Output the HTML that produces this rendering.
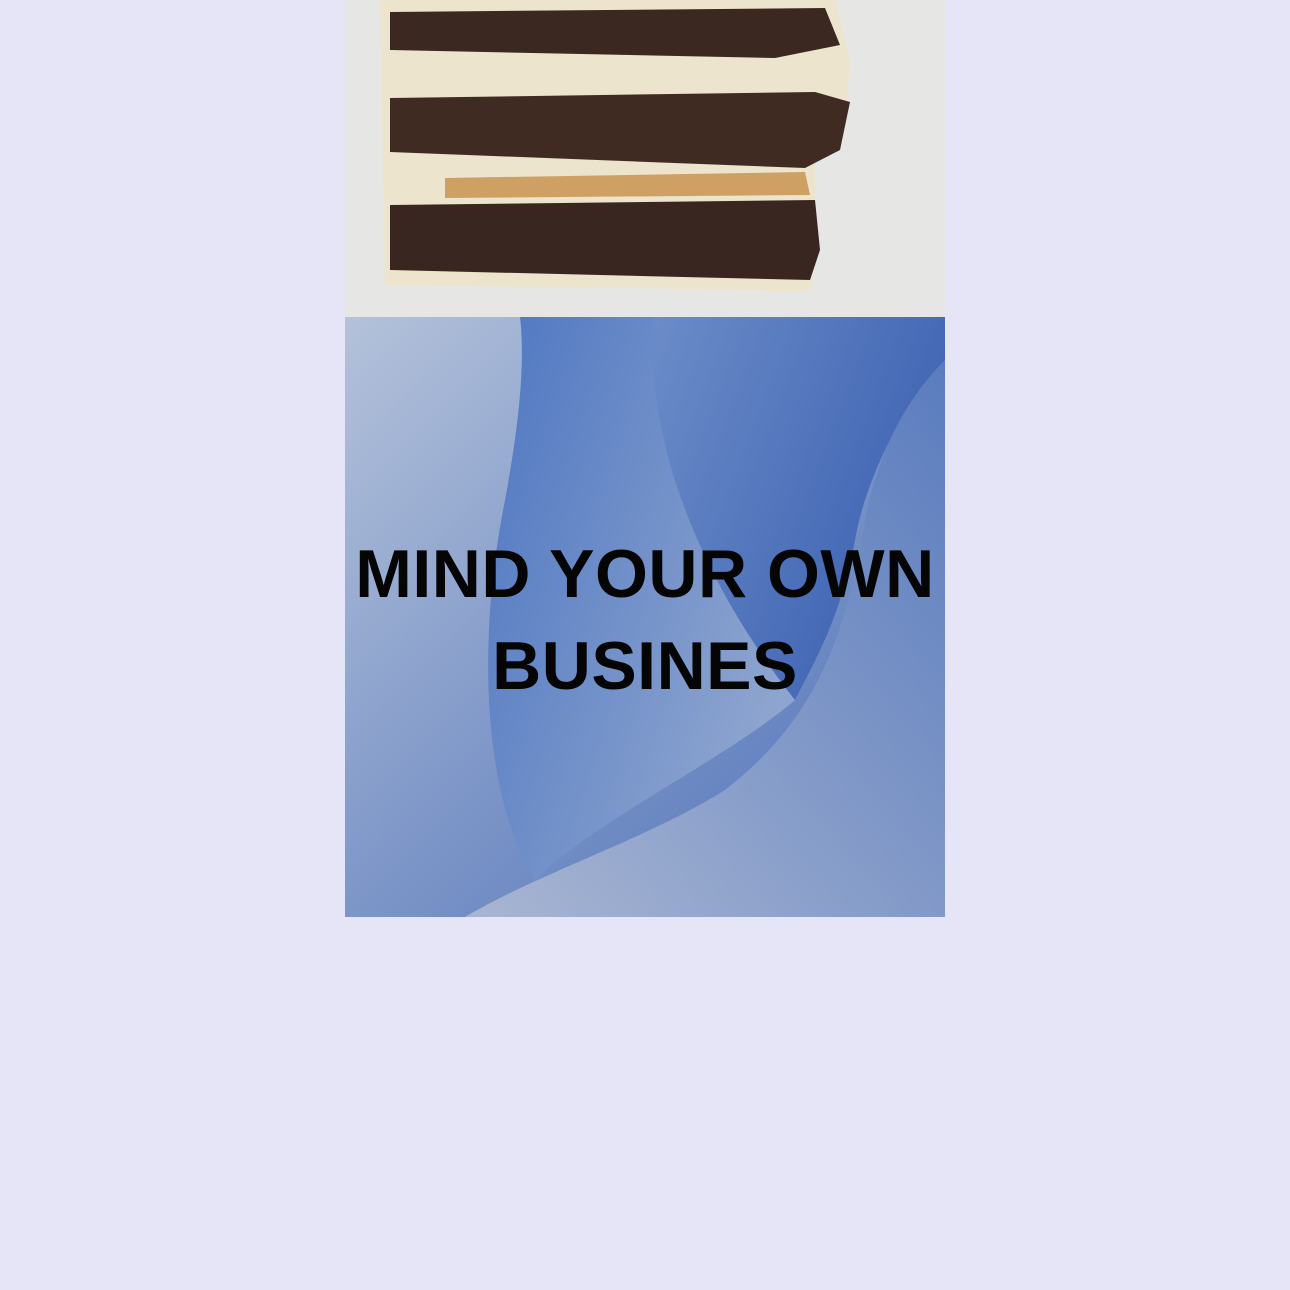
<!DOCTYPE html>
<html><head><style>
html,body{margin:0;padding:0;background:#e6e5f8;width:1290px;height:1290px;overflow:hidden}
.wrap{position:absolute;left:345px;top:0;width:600px}
.txt{position:absolute;left:335px;top:528px;width:620px;text-align:center;font-family:"Liberation Sans",sans-serif;font-weight:bold;font-size:68px;line-height:92px;color:#050505;letter-spacing:0.5px}
</style></head><body>
<div class="wrap">
<svg width="600" height="917" viewBox="0 0 600 917">
<defs>
<linearGradient id="bg" x1="0" y1="0" x2="1" y2="1"><stop offset="0" stop-color="#b4c2da"/><stop offset="0.5" stop-color="#7d96c8"/><stop offset="1" stop-color="#4b6fb8"/></linearGradient>
<linearGradient id="g2" x1="0" y1="0" x2="1" y2="0.6"><stop offset="0" stop-color="#4f77c2"/><stop offset="1" stop-color="#8ea5cf"/></linearGradient>
<linearGradient id="g3" x1="0" y1="0" x2="1" y2="0.5"><stop offset="0" stop-color="#6b8cc8"/><stop offset="1" stop-color="#3d62b2"/></linearGradient>
<linearGradient id="g4" x1="0" y1="1" x2="1" y2="0"><stop offset="0" stop-color="#a9b6d2"/><stop offset="1" stop-color="#5a7cbe"/></linearGradient>
</defs>
<rect x="0" y="0" width="600" height="317" fill="#e6e6e4"/>
<path d="M35 0 H490 L505 60 L500 120 L470 160 L470 260 L465 290 L440 292 L420 290 L40 285 Z" fill="#ece4cc"/>
<path d="M45 12 L480 8 L495 45 L430 58 L45 50 Z" fill="#3b2820"/>
<path d="M45 98 L470 92 L505 102 L495 150 L460 168 L45 152 Z" fill="#3f2b22"/>
<path d="M45 205 L470 200 L475 250 L465 280 L45 270 Z" fill="#3a2620"/>
<path d="M100 178 L460 172 L465 195 L100 198 Z" fill="#cfa064"/>
<rect x="0" y="317" width="600" height="600" fill="url(#bg)"/>
<path d="M175 317 H310 C300 420 340 560 450 700 C380 760 250 820 190 880 C140 800 130 650 160 500 C175 420 180 360 175 317 Z" fill="url(#g2)"/>
<path d="M308 317 H600 V360 C560 400 520 480 510 540 C495 620 470 660 450 700 C340 560 300 420 308 317 Z" fill="url(#g3)"/>
<path d="M600 360 V917 H120 C200 870 300 840 380 790 C470 720 500 640 520 520 C535 440 570 390 600 360 Z" fill="url(#g4)"/>
</svg>
</div>
<div class="txt">MIND YOUR OWN<br>BUSINES</div>
</body></html>
